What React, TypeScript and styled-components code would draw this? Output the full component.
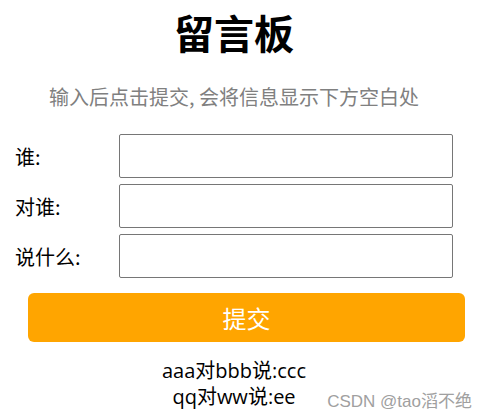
import React, { useState } from "react";
import styled, { createGlobalStyle } from "styled-components";

const Global = createGlobalStyle`
  html, body { margin: 0; padding: 0; background: #fff; }
  body { font-family: "Open Sans", "Noto Sans CJK SC", sans-serif; color: #000; }
`;

const Page = styled.div`
  position: relative;
  width: 487px;
  height: 420px;
  overflow: hidden;
`;

const Board = styled.div`
  width: 468px;
  display: flex;
  flex-direction: column;
  padding-top: 8px;
`;

const Title = styled.h1`
  margin: 0;
  font-family: "Noto Sans CJK SC", sans-serif;
  font-size: 40px;
  font-weight: 700;
  line-height: 48px;
  text-align: center;
`;

const Hint = styled.p`
  margin: 27px 0 0;
  font-family: "Noto Sans CJK SC", sans-serif;
  font-size: 20px;
  line-height: 28px;
  color: #808080;
  text-align: center;
`;

const Form = styled.form`
  display: flex;
  flex-direction: column;
  gap: 6px;
  margin-top: 23px;
`;

const Row = styled.label`
  display: flex;
  align-items: center;
  height: 44px;
`;

const LabelText = styled.span`
  width: 104px;
  padding-left: 15px;
  font-family: "Noto Sans CJK SC", sans-serif;
  font-size: 20px;
`;

const Field = styled.input`
  box-sizing: border-box;
  width: 334px;
  height: 44px;
  margin: 0;
  border: 1px solid #767676;
  border-radius: 2px;
  background: #fff;
  font-size: 18px;
  padding: 0 6px;
  outline: none;
`;

const Submit = styled.button`
  box-sizing: border-box;
  margin: 15px 0 0 28px;
  width: 437px;
  height: 49px;
  border: none;
  border-radius: 6px;
  background: #ffa500;
  color: #fff;
  font-family: "Noto Sans CJK SC", sans-serif;
  font-size: 24px;
  line-height: 49px;
  padding: 0;
  cursor: pointer;
`;

const Messages = styled.div`
  margin-top: 16px;
  display: flex;
  flex-direction: column;
  align-items: center;
`;

const Message = styled.div`
  font-family: "Open Sans", "Noto Sans CJK SC", sans-serif;
  font-size: 20px;
  line-height: 26px;
`;

const Watermark = styled.div`
  position: absolute;
  right: 15px;
  bottom: 8px;
  font-family: "Liberation Sans", "Noto Sans CJK SC", sans-serif;
  font-size: 17px;
  line-height: 20px;
  color: #a0a0a0;
`;

type Msg = { who: string; to: string; what: string };

export default function App() {
  const [msgs] = useState<Msg[]>([
    { who: "aaa", to: "bbb", what: "ccc" },
    { who: "qq", to: "ww", what: "ee" },
  ]);
  return (
    <Page>
      <Global />
      <Board>
        <Title>留言板</Title>
        <Hint>输入后点击提交, 会将信息显示下方空白处</Hint>
        <Form onSubmit={(e) => e.preventDefault()}>
          <Row>
            <LabelText>谁:</LabelText>
            <Field type="text" />
          </Row>
          <Row>
            <LabelText>对谁:</LabelText>
            <Field type="text" />
          </Row>
          <Row>
            <LabelText>说什么:</LabelText>
            <Field type="text" />
          </Row>
        </Form>
        <Submit type="button">提交</Submit>
        <Messages>
          {msgs.map((m, i) => (
            <Message key={i}>
              {m.who}对{m.to}说:{m.what}
            </Message>
          ))}
        </Messages>
      </Board>
      <Watermark>CSDN @tao滔不绝</Watermark>
    </Page>
  );
}
